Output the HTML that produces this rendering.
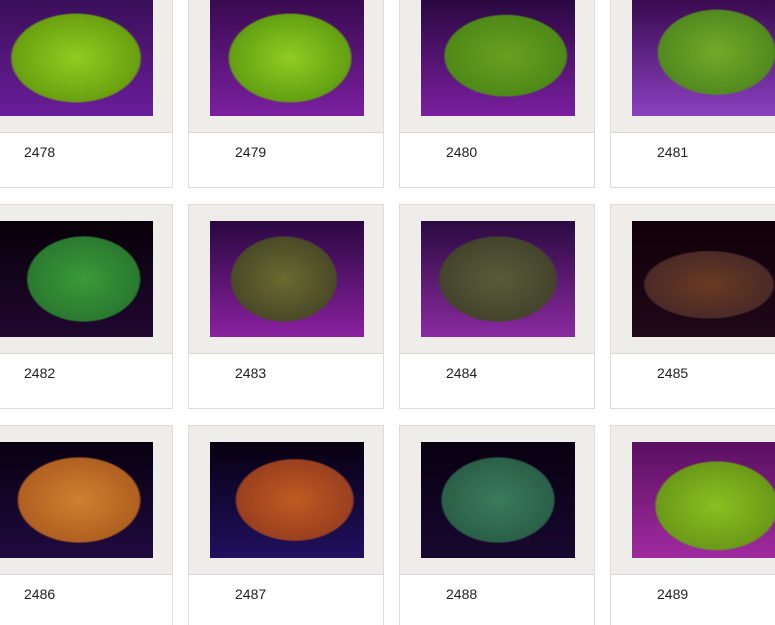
<!DOCTYPE html>
<html><head><style>
html,body{margin:0;padding:0;background:#fff;width:775px;height:625px;overflow:hidden;position:relative;font-family:"Liberation Sans",Arial,sans-serif}
.c{position:absolute;width:196px;height:205px;border:1px solid #dedcd8;box-sizing:border-box;background:#fff}
.f{position:absolute;left:0;top:0;width:100%;height:148px;background:#eeedea;border-bottom:1px solid #d9d7d3}
.i{position:absolute;left:21px;top:16px;width:154px;height:116px}
.t{position:absolute;left:46px;top:160px;font-size:14px;color:#222}
</style></head><body>
<div class="c" style="left:-23px;top:-17px"><div class="f"></div><div class="i" style="background:radial-gradient(ellipse 55% 50% at 50% 50%,#8fcc20,#6aa010 75%,transparent 78%),linear-gradient(#3a0f5a,#6a1d9a)"></div><div class="t">2478</div></div>
<div class="c" style="left:188px;top:-17px"><div class="f"></div><div class="i" style="background:radial-gradient(ellipse 52% 50% at 52% 50%,#90cc22,#62a012 75%,transparent 78%),linear-gradient(#3a0a50,#7a1fa0)"></div><div class="t">2479</div></div>
<div class="c" style="left:399px;top:-17px"><div class="f"></div><div class="i" style="background:radial-gradient(ellipse 52% 46% at 55% 48%,#6aa020,#4e8a18 75%,transparent 78%),linear-gradient(#2a0840,#7a1fa0)"></div><div class="t">2480</div></div>
<div class="c" style="left:610px;top:-17px"><div class="f"></div><div class="i" style="background:radial-gradient(ellipse 50% 48% at 55% 45%,#72aa28,#528a20 75%,transparent 78%),linear-gradient(#3a0a50,#8a40c0)"></div><div class="t">2481</div></div>

<div class="c" style="left:-23px;top:204px"><div class="f"></div><div class="i" style="background:radial-gradient(ellipse 48% 48% at 55% 50%,#3a9a38,#2a7a30 75%,transparent 78%),linear-gradient(#080008,#200830)"></div><div class="t">2482</div></div>
<div class="c" style="left:188px;top:204px"><div class="f"></div><div class="i" style="background:radial-gradient(ellipse 45% 48% at 48% 50%,#6a6a30,#4a4a28 75%,transparent 78%),linear-gradient(#2a0840,#8a20a0)"></div><div class="t">2483</div></div>
<div class="c" style="left:399px;top:204px"><div class="f"></div><div class="i" style="background:radial-gradient(ellipse 50% 48% at 50% 50%,#5a5a3a,#44442c 75%,transparent 78%),linear-gradient(#2a0a40,#8a2aa0)"></div><div class="t">2484</div></div>
<div class="c" style="left:610px;top:204px"><div class="f"></div><div class="i" style="background:radial-gradient(ellipse 55% 38% at 50% 55%,#6a3a20,#4a2a28 75%,transparent 78%),linear-gradient(#100008,#200818)"></div><div class="t">2485</div></div>

<div class="c" style="left:-23px;top:425px"><div class="f"></div><div class="i" style="background:radial-gradient(ellipse 52% 48% at 52% 50%,#d08030,#b06020 75%,transparent 78%),linear-gradient(#080010,#200a40)"></div><div class="t">2486</div></div>
<div class="c" style="left:188px;top:425px"><div class="f"></div><div class="i" style="background:radial-gradient(ellipse 50% 46% at 55% 50%,#c05a20,#9a4020 75%,transparent 78%),linear-gradient(#080010,#201060)"></div><div class="t">2487</div></div>
<div class="c" style="left:399px;top:425px"><div class="f"></div><div class="i" style="background:radial-gradient(ellipse 48% 48% at 50% 50%,#3a7a5a,#2a6048 75%,transparent 78%),linear-gradient(#080010,#180830)"></div><div class="t">2488</div></div>
<div class="c" style="left:610px;top:425px"><div class="f"></div><div class="i" style="background:radial-gradient(ellipse 52% 50% at 55% 55%,#8ac020,#6a9a18 75%,transparent 78%),linear-gradient(#5a1060,#a02aa0)"></div><div class="t">2489</div></div>
</body></html>
